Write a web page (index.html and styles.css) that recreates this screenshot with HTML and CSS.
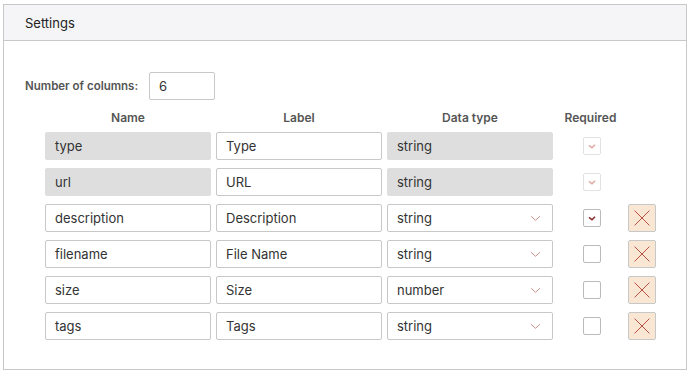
FILE: index.html
```html
<!DOCTYPE html>
<html lang="en">
  <head>
    <meta charset="UTF-8" />
    <meta name="viewport" content="width=device-width, initial-scale=1.0" />
    <title>Settings</title>
    <link rel="stylesheet" href="styles.css">
  </head>
  <body>
    <div class="panel">
      <div class="panel-header">Settings</div>
      <div class="panel-body">
        <div class="columns-count">
          <label for="cols">Number of columns:</label>
          <input id="cols" class="field count" type="text" value="6" />
        </div>
        <div class="fields">
          <div class="head">Name</div>
          <div class="head">Label</div>
          <div class="head">Data type</div>
          <div class="head">Required</div>
          <div></div>

          <div class="field readonly">type</div>
          <div class="field">Type</div>
          <div class="field readonly">string</div>
          <div class="cell"><span class="check checked disabled"><svg viewBox="0 0 10 10"><polyline points="2.5,4.5 5,6.5 7.5,4" /></svg></span></div>
          <div></div>

          <div class="field readonly">url</div>
          <div class="field">URL</div>
          <div class="field readonly">string</div>
          <div class="cell"><span class="check checked disabled"><svg viewBox="0 0 10 10"><polyline points="2.5,4.5 5,6.5 7.5,4" /></svg></span></div>
          <div></div>

          <div class="field">description</div>
          <div class="field">Description</div>
          <div class="field select">string<svg class="chevron" viewBox="0 0 12 8"><polyline points="1,1.5 6,6 11,1.5" /></svg></div>
          <div class="cell"><span class="check checked"><svg viewBox="0 0 10 10"><polyline points="2.5,4.5 5,6.5 7.5,4" /></svg></span></div>
          <button class="remove"><svg viewBox="0 0 28 28"><line x1="6" y1="6" x2="22" y2="22" /><line x1="22" y1="6" x2="6" y2="22" /></svg></button>

          <div class="field">filename</div>
          <div class="field">File Name</div>
          <div class="field select">string<svg class="chevron" viewBox="0 0 12 8"><polyline points="1,1.5 6,6 11,1.5" /></svg></div>
          <div class="cell"><span class="check"></span></div>
          <button class="remove"><svg viewBox="0 0 28 28"><line x1="6" y1="6" x2="22" y2="22" /><line x1="22" y1="6" x2="6" y2="22" /></svg></button>

          <div class="field">size</div>
          <div class="field">Size</div>
          <div class="field select">number<svg class="chevron" viewBox="0 0 12 8"><polyline points="1,1.5 6,6 11,1.5" /></svg></div>
          <div class="cell"><span class="check"></span></div>
          <button class="remove"><svg viewBox="0 0 28 28"><line x1="6" y1="6" x2="22" y2="22" /><line x1="22" y1="6" x2="6" y2="22" /></svg></button>

          <div class="field">tags</div>
          <div class="field">Tags</div>
          <div class="field select">string<svg class="chevron" viewBox="0 0 12 8"><polyline points="1,1.5 6,6 11,1.5" /></svg></div>
          <div class="cell"><span class="check"></span></div>
          <button class="remove"><svg viewBox="0 0 28 28"><line x1="6" y1="6" x2="22" y2="22" /><line x1="22" y1="6" x2="6" y2="22" /></svg></button>
        </div>
      </div>
    </div>
  </body>
</html>
```

FILE: styles.css
```css
:root {
  --border: #c8c8c8;
  --text: #333333;
  --muted: #555555;
  --accent: #b5443a;
}

body {
  margin: 0;
  padding: 4px 7px 0 3px;
  font-family: Inter, "Noto Sans", sans-serif;
  font-size: 13px;
  color: var(--text);
  background: #ffffff;
}

.panel {
  border: 1px solid var(--border);
  height: 366px;
  box-sizing: border-box;
}

.panel-header {
  height: 35px;
  line-height: 36px;
  padding-left: 21px;
  background: #f5f5f7;
  border-bottom: 1px solid var(--border);
  color: #222222;
}

.panel-body {
  padding: 31px 0 0 21px;
}

.columns-count {
  display: flex;
  align-items: center;
  gap: 11px;
  margin-bottom: 10px;
}

.columns-count label {
  font-size: 11.5px;
  font-weight: 600;
  color: var(--muted);
}

.field {
  box-sizing: border-box;
  height: 28px;
  border: 1px solid var(--border);
  border-radius: 2px;
  padding: 0 9px;
  display: flex;
  align-items: center;
  font-family: inherit;
  font-size: 13px;
  color: var(--text);
  background: #ffffff;
}

.count {
  width: 66px;
  outline: none;
}

.fields {
  margin-left: 20px;
  display: grid;
  grid-template-columns: 166px 166px 166px 65px 28px;
  column-gap: 5px;
  row-gap: 8px;
  align-items: center;
}

.head {
  text-align: center;
  font-size: 12px;
  font-weight: 600;
  color: var(--muted);
  height: 16px;
  line-height: 16px;
  margin-bottom: -2px;
}

.readonly {
  background: #dedede;
  border-color: #dedede;
}

.select {
  justify-content: space-between;
}

.chevron {
  width: 11px;
  height: 7px;
  margin-right: 2px;
  fill: none;
  stroke: #c98a86;
  stroke-width: 1.1;
}

.cell {
  display: flex;
  justify-content: center;
  padding-left: 3px;
}

.check {
  box-sizing: border-box;
  width: 18px;
  height: 18px;
  border: 1px solid #bbbbbb;
  border-radius: 2px;
  background: #ffffff;
  display: flex;
  align-items: center;
  justify-content: center;
}

.check svg {
  width: 12px;
  height: 12px;
  fill: none;
  stroke: #8e2a2a;
  stroke-width: 1.3;
}

.check.disabled {
  border-color: #e2e2e2;
}

.check.disabled svg {
  stroke: #e0a9a4;
}

.remove {
  width: 28px;
  height: 28px;
  padding: 0;
  border: 1px solid var(--border);
  border-radius: 2px;
  background: #fae7d3;
  display: flex;
  align-items: center;
  justify-content: center;
  cursor: pointer;
}

.remove svg {
  width: 26px;
  height: 26px;
  stroke: var(--accent);
  stroke-width: 1;
}
```
